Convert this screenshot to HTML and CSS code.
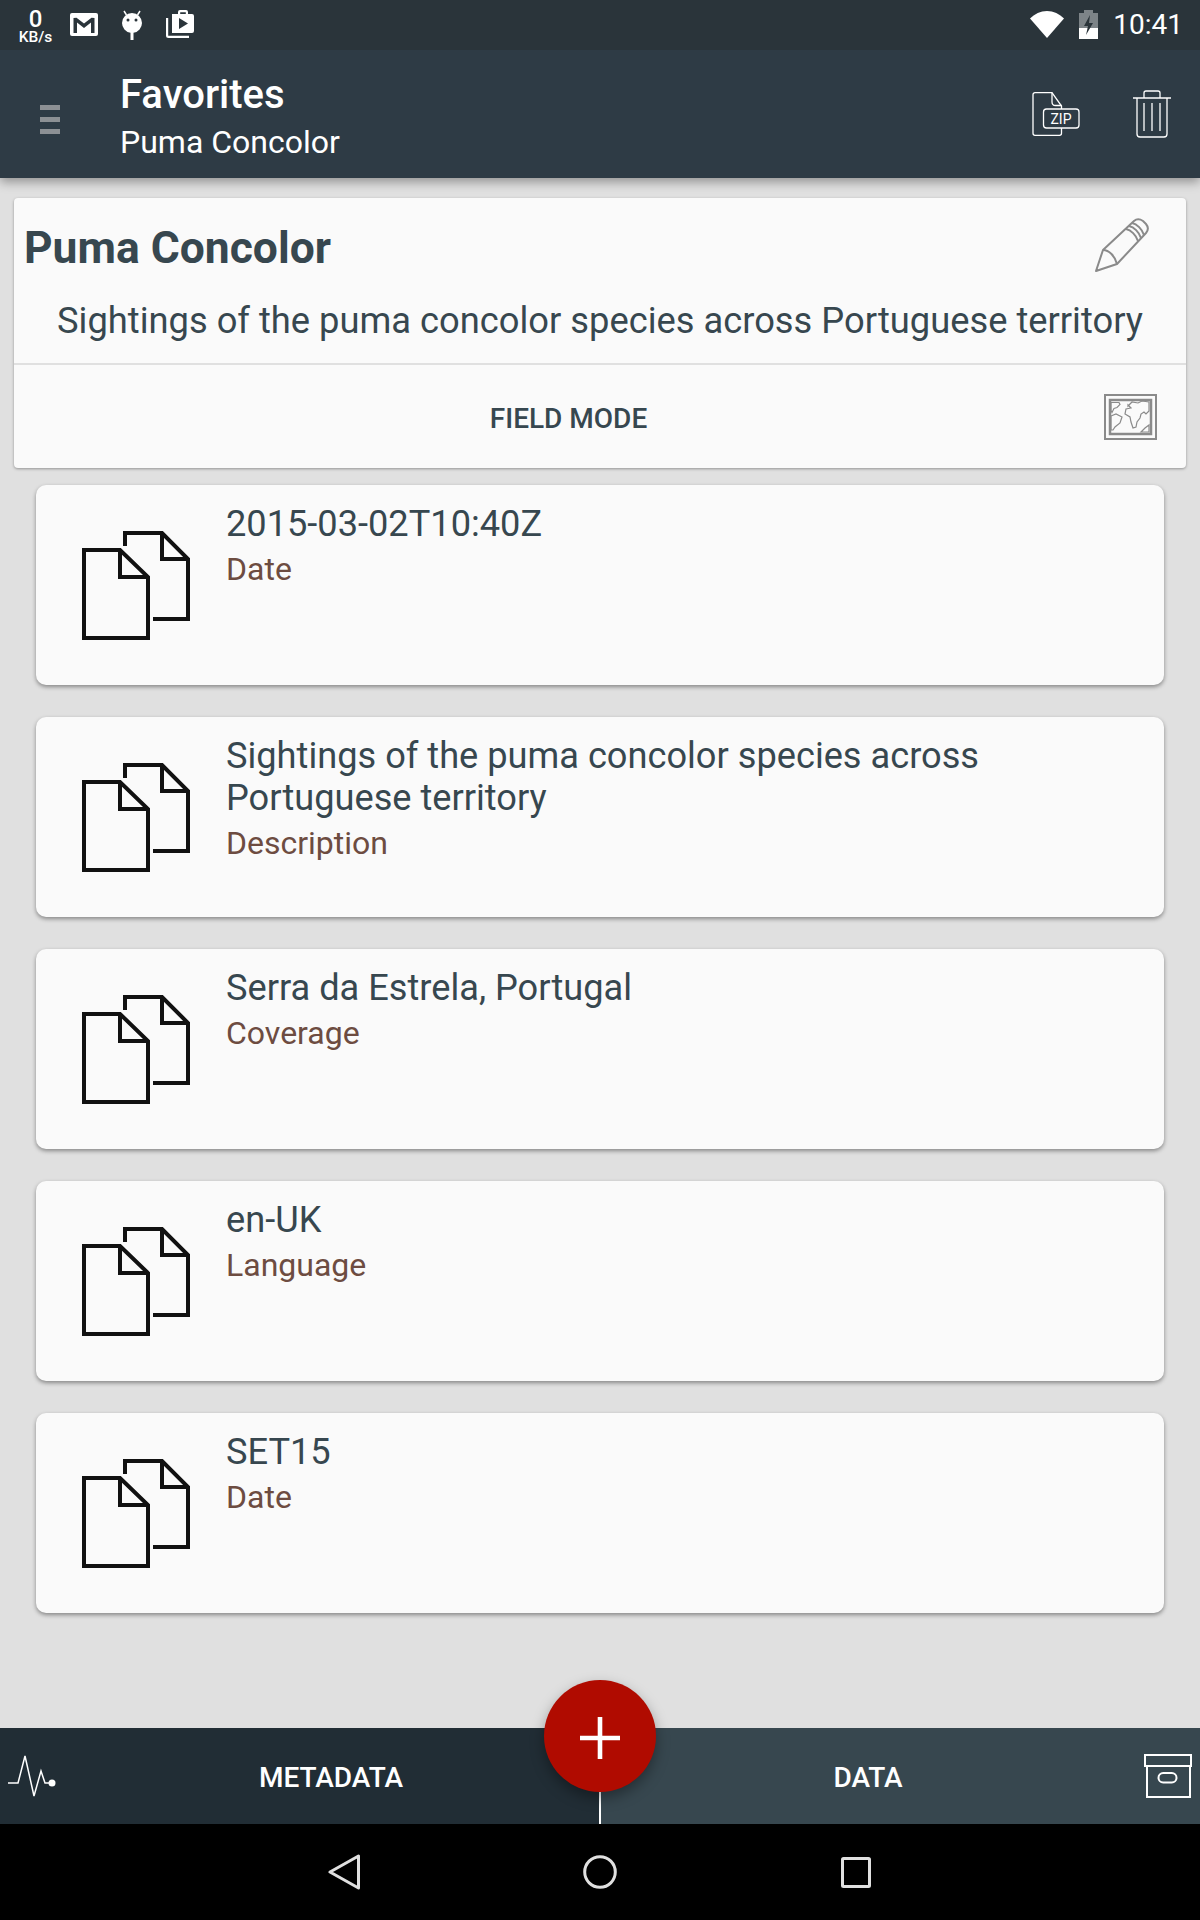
FILE: index.html
```html
<!DOCTYPE html>
<html lang="en">
<head>
<meta charset="utf-8">
<title>Favorites</title>
<link rel="stylesheet" href="styles.css">
</head>
<body>
<div class="screen">
  <header class="status">
    <div class="speed"><span class="speed-num">0</span><span class="speed-unit">KB/s</span></div>
    <svg class="st-mail" viewBox="0 0 28 23"><path fill="#fff" d="M2 0h24a2 2 0 0 1 2 2v19a2 2 0 0 1-2 2H2a2 2 0 0 1-2-2V2a2 2 0 0 1 2-2z"/><path fill="#2a343a" d="M3.500 5v15h3.500V9.500l7 5.500 7-5.500V20h3.500V5l-3-.2L14 10.500 6.500 4.800z"/></svg>
    <svg class="st-droid" viewBox="0 0 20 30"><path fill="#fff" d="M10 3a10 10 0 0 1 10 10 10 10 0 0 1-8.500 9.800V30h-3v-7.200A10 10 0 0 1 0 13 10 10 0 0 1 10 3z"/><path stroke="#fff" stroke-width="1.500" d="M4.500 5 2 1M15.500 5 18 1"/><circle cx="6" cy="10" r="1.500" fill="#2a343a"/><circle cx="14" cy="10" r="1.500" fill="#2a343a"/></svg>
    <svg class="st-play" viewBox="0 0 28 28"><path fill="#fff" d="M6 4h6V2a2 2 0 0 1 2-2h6a2 2 0 0 1 2 2v2h4a2 2 0 0 1 2 2v15a2 2 0 0 1-2 2H6z"/><path fill="#2a343a" d="M14.200 4V2.200h5.600V4zM13 8l9 5.500-9 5.500z"/><path fill="none" stroke="#fff" stroke-width="2.200" d="M1.100 8v17.500c0 .8.600 1.400 1.400 1.400H23"/></svg>
    <div class="st-spacer"></div>
    <svg class="st-wifi" viewBox="0 0 34 27"><path fill="#fff" d="M17 27 0 7.500C4.500 3 10.500 0 17 0s12.500 3 17 7.500z"/></svg>
    <svg class="st-batt" viewBox="0 0 19 29"><path fill="#7d8488" d="M0 3h5V0h9v3h5v26H0z"/><path fill="#fff" d="M0 18h19v11H0z"/><path fill="#2a343a" d="M11 5 5 16h4l-2 9 7-12h-4z"/></svg>
    <span class="st-time">10:41</span>
  </header>

  <header class="appbar">
    <div class="burger"><i></i><i></i><i></i></div>
    <div class="titles">
      <div class="title">Favorites</div>
      <div class="subtitle">Puma Concolor</div>
    </div>
    <svg class="ab-zip" viewBox="0 0 48 44"><g fill="none" stroke="#fff" stroke-width="1.300"><path d="M29.500 17v-3L20 .7H3a2 2 0 0 0-2 2v38.600a2 2 0 0 0 2 2h24.500a2 2 0 0 0 2-2V36"/><path d="M20 .7V10c0 2 1.500 3.500 3.500 3.500h6"/><rect x="11.500" y="17" width="35.500" height="19" rx="3"/></g><text x="29" y="32" class="zip-text">ZIP</text></svg>
    <svg class="ab-trash" viewBox="0 0 38 48"><g fill="none" stroke="#fff" stroke-width="1.300"><path d="M0 8h38M11 8V3a2 2 0 0 1 2-2h12a2 2 0 0 1 2 2v5M4 8v36a3 3 0 0 0 3 3h24a3 3 0 0 0 3-3V8M11 13v28M19 13v28M27 13v28"/></g></svg>
  </header>

  <main class="content">
    <section class="head-card">
      <div class="hc-top">
        <div class="hc-title-row">
          <h1 class="hc-title">Puma Concolor</h1>
          <svg class="hc-pencil" viewBox="0 0 54 54"><g fill="none" stroke="#8a8a8a" stroke-width="2" stroke-linejoin="round"><path d="M1 53 8 32 39 3c3-2.500 6-2 9 0l3 3c2.500 3 2.500 6 0 9L22 46z"/><path d="M8 32c6 0 12 6 14 14M34 8c5 1 10 6 12 12M37 5c5 1 10 6 12 12M31 11c5 1 10 6 12 12"/></g></svg>
        </div>
        <p class="hc-desc">Sightings of the puma concolor species across Portuguese territory</p>
      </div>
      <div class="hc-bottom">
        <span class="hc-mode">FIELD MODE</span>
        <svg class="hc-map" viewBox="0 0 53 46"><g fill="none" stroke="#8a8a8a"><rect x="1" y="1" width="51" height="44" stroke-width="2"/><rect x="6" y="6" width="41" height="34" stroke-width="2.500"/><path stroke-width="1.200" d="M7 8.500h8l1 2-3 3-3 1-2 4-1-2zM7 22l5-2 6 3-2 6-5 4-2 3-2 0zM24 12l4-4 6 1 4-2 7 1v9l-3 3-2-2-3 2-1 4-3 4-1 5-3 1-2-6-1-5-5-3 1-5 5-1-3-3zM37 38l4-4 4-3v7z"/></g></svg>
      </div>
    </section>

    <ul class="items">
      <li class="item">
        <svg class="doc" viewBox="0 0 108 110"><use href="#docs"/></svg>
        <div class="item-text"><div class="value">2015-03-02T10:40Z</div><div class="label">Date</div></div>
      </li>
      <li class="item">
        <svg class="doc" viewBox="0 0 108 110"><use href="#docs"/></svg>
        <div class="item-text"><div class="value">Sightings of the puma concolor species across Portuguese territory</div><div class="label">Description</div></div>
      </li>
      <li class="item">
        <svg class="doc" viewBox="0 0 108 110"><use href="#docs"/></svg>
        <div class="item-text"><div class="value">Serra da Estrela, Portugal</div><div class="label">Coverage</div></div>
      </li>
      <li class="item">
        <svg class="doc" viewBox="0 0 108 110"><use href="#docs"/></svg>
        <div class="item-text"><div class="value">en-UK</div><div class="label">Language</div></div>
      </li>
      <li class="item">
        <svg class="doc" viewBox="0 0 108 110"><use href="#docs"/></svg>
        <div class="item-text"><div class="value">SET15</div><div class="label">Date</div></div>
      </li>
    </ul>
  </main>

  <div class="tabs">
    <div class="tab tab-left">
      <svg class="tab-pulse" viewBox="0 0 48 42"><path fill="none" stroke="#fff" stroke-width="1.500" d="M0 28h10l7-27 9 40 7-25 4 12h8"/><circle cx="44" cy="28" r="3.500" fill="#fff"/></svg>
      <span class="tab-label">METADATA</span>
    </div>
    <div class="tab tab-right">
      <span class="tab-label">DATA</span>
      <svg class="tab-box" viewBox="0 0 48 44"><g fill="none" stroke="#fff" stroke-width="2"><rect x="1" y="1" width="46" height="11"/><path d="M3 12v31h43V12"/><rect x="14.500" y="19" width="18" height="9.500" rx="4.700"/></g></svg>
    </div>
    <div class="fab-line"></div>
    <button class="fab" type="button" aria-label="Add"><svg viewBox="0 0 40 42"><path fill="#fff" d="M17.700 0h4.600v18.700H40v4.600H22.300V42h-4.600V23.300H0v-4.600h17.700z"/></svg></button>
  </div>

  <nav class="sysnav">
    <svg class="nav-back" viewBox="0 0 32 36"><path fill="none" stroke="#e0e0e0" stroke-width="3" stroke-linejoin="round" d="M30.500 2v32L2 18z"/></svg>
    <svg class="nav-home" viewBox="0 0 34 34"><circle cx="17" cy="17" r="15.300" fill="none" stroke="#e0e0e0" stroke-width="3"/></svg>
    <svg class="nav-recent" viewBox="0 0 30 31"><rect x="1.500" y="1.500" width="27" height="28" rx="1" fill="none" stroke="#e0e0e0" stroke-width="3"/></svg>
  </nav>
</div>

<svg class="defs" aria-hidden="true">
  <defs>
    <g id="docs" fill="none" stroke="#111" stroke-width="4" stroke-linejoin="miter">
      <path d="M2 19H38L66 46v61H2z"/>
      <path d="M38 19V46H66"/>
      <path d="M43 15V2H80L106 28v60H71"/>
      <path d="M80 2V28h26"/>
    </g>
  </defs>
</svg>
</body>
</html>
```

FILE: styles.css
```css
* { box-sizing: border-box; }
html, body { margin: 0; padding: 0; }
body { font-family: Roboto, "Liberation Sans", sans-serif; background: #e0e0e0; }
.defs { position: absolute; width: 0; height: 0; }

.screen { width: 1200px; height: 1920px; display: flex; flex-direction: column; overflow: hidden; position: relative; }

/* status bar */
.status { height: 50px; flex: none; background: #2a343a; display: flex; align-items: flex-start; color: #fff; padding-left: 19px; position: relative; z-index: 2; }
.speed { width: 33px; display: flex; flex-direction: column; align-items: center; margin-top: 8px; }
.speed-num { font-size: 24px; line-height: 22px; font-weight: 500; }
.speed-unit { font-size: 15.500px; line-height: 14px; font-weight: 500; white-space: nowrap; }
.st-mail { width: 28px; height: 23px; margin: 13px 0 0 18px; }
.st-droid { width: 20px; height: 30px; margin: 10px 0 0 24px; }
.st-play { width: 28px; height: 28px; margin: 10px 0 0 24px; }
.st-spacer { flex: 1; }
.st-wifi { width: 34px; height: 27px; margin: 11px 0 0 0; }
.st-batt { width: 19px; height: 29px; margin: 10px 0 0 15px; }
.st-time { font-size: 28px; line-height: 32px; margin: 9px 17px 0 15px; }

/* app bar */
.appbar { height: 128px; flex: none; background: #2e3b45; display: flex; align-items: center; color: #fff; box-shadow: 0 4px 10px rgba(0,0,0,.35); position: relative; z-index: 1; }
.burger { width: 20px; margin: 10px 60px 0 40px; display: flex; flex-direction: column; gap: 7px; }
.burger i { display: block; height: 5px; background: #8c9094; }
.titles { flex: 1; padding-top: 6px; }
.title { font-size: 40px; line-height: 46px; font-weight: 500; }
.subtitle { font-size: 32px; line-height: 42px; margin-top: 3px; }
.ab-zip { width: 48px; height: 44px; margin: 0 53px 0 0; }
.zip-text { font-family: Roboto, sans-serif; font-size: 14px; fill: #fff; text-anchor: middle; }
.ab-trash { width: 38px; height: 48px; margin: 0 29px 0 0; }

/* content */
.content { flex: 1; min-height: 0; padding: 20px 14px 0; display: flex; flex-direction: column; }
.head-card { background: #fafafa; border-radius: 4px; box-shadow: 0 1px 3px rgba(0,0,0,.35); flex: none; }
.hc-top { height: 167px; border-bottom: 2px solid #e0e0e0; padding: 20px 10px 0; }
.hc-title-row { display: flex; justify-content: space-between; align-items: flex-start; }
.hc-title { margin: 0; font-size: 44.400px; line-height: 60px; font-weight: 700; color: #37474f; }
.hc-pencil { width: 54px; height: 54px; margin: 0 27px 0 0; }
.hc-desc { margin: 20px 0 0; font-size: 36.300px; line-height: 46px; color: #37474f; text-align: center; white-space: nowrap; }
.hc-bottom { height: 103px; display: flex; align-items: center; }
.hc-mode { flex: 1; text-align: center; font-size: 28px; font-weight: 500; color: #37474f; padding: 4px 0 0 19px; }
.hc-map { width: 53px; height: 46px; margin: 0 29px 0 0; }

.items { list-style: none; margin: 17px 22px 0; padding: 0; display: flex; flex-direction: column; gap: 32px; }
.item { height: 200px; background: #fafafa; border-radius: 10px; box-shadow: 0 2px 4px rgba(0,0,0,.4); display: flex; align-items: flex-start; padding: 0 20px 0 46px; }
.doc { width: 108px; height: 110px; margin-top: 46px; flex: none; }
.item-text { margin-left: 36px; padding-top: 17.500px; }
.value { font-size: 36.200px; line-height: 42px; color: #37474f; }
.label { font-size: 32px; line-height: 38px; margin-top: 5px; color: #6d4c41; }

/* tabs */
.tabs { height: 96px; flex: none; display: grid; grid-template-columns: 600px 600px; position: relative; color: #fff; }
.tab { display: flex; align-items: center; }
.tab-left { background: #212d35; }
.tab-right { background: #37474f; }
.tab-label { flex: 1; text-align: center; font-size: 28px; font-weight: 500; padding-top: 3px; }
.tab-pulse { width: 48px; height: 42px; margin: 0 6px 0 8px; }
.tab-box { width: 48px; height: 44px; margin: 0 8px; }
.fab-line { position: absolute; left: 599px; top: 64px; width: 2px; height: 32px; background: #fff; }
.fab { position: absolute; left: 544px; top: -48px; width: 112px; height: 112px; border: 0; border-radius: 50%; background: #b00b00; padding: 4px 0 0; display: flex; align-items: center; justify-content: center; box-shadow: 0 6px 14px rgba(0,0,0,.35); }
.fab svg { width: 40px; height: 42px; }

/* system nav */
.sysnav { height: 96px; flex: none; background: #000; display: flex; align-items: center; padding-left: 328px; }
.nav-back { width: 32px; height: 36px; }
.nav-home { width: 34px; height: 34px; margin-left: 223px; }
.nav-recent { width: 30px; height: 31px; margin-left: 224px; }
```
